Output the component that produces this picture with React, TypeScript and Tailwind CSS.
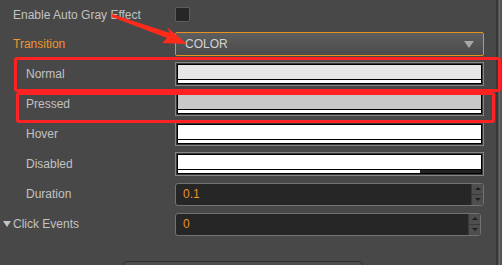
import React from "react";

const font = { fontFamily: '"Liberation Sans", Arial, sans-serif' };

function ColorField({ fill, bar }: { fill: string; bar?: "partial" }) {
  return (
    <div className="h-[24px] flex-1 border border-[#858585] bg-[#3a3a3a] p-px">
      <div className="flex h-full flex-col border border-black">
        <div className={`flex-1 ${fill}`} />
        <div className="h-px bg-black" />
        {bar === "partial" ? (
          <div className="flex h-[3px]">
            <div className="w-[80%] bg-white" />
            <div className="flex-1 bg-[#222222]" />
          </div>
        ) : (
          <div className="h-[3px] bg-white" />
        )}
      </div>
    </div>
  );
}

function NumberField({ value, className = "" }: { value: string; className?: string }) {
  return (
    <div
      className={`flex h-[23px] flex-1 overflow-hidden rounded-[3px] border border-[#737373] bg-[#262626] ${className}`}
    >
      <div className="flex flex-1 items-center pl-[7px] text-[12px] text-[#e8902a]">{value}</div>
      <div className="flex w-[12px] flex-col border-l border-[#3a3a3a] bg-[#4e4e4e]">
        <div className="flex flex-1 items-center justify-center border-b border-[#3a3a3a]">
          <div className="h-0 w-0 border-x-[3px] border-b-[3px] border-x-transparent border-b-[#1e1e1e]" />
        </div>
        <div className="flex flex-1 items-center justify-center">
          <div className="h-0 w-0 border-x-[3px] border-t-[3px] border-x-transparent border-t-[#1e1e1e]" />
        </div>
      </div>
    </div>
  );
}

function Row({
  label,
  indent = true,
  children,
  labelClass = "text-[#c2c2c2]",
}: {
  label: React.ReactNode;
  indent?: boolean;
  children: React.ReactNode;
  labelClass?: string;
}) {
  return (
    <div className="flex h-[30px] shrink-0 items-center">
      <div className={`w-[175px] shrink-0 text-[12px] ${indent ? "pl-[26px]" : "pl-[13px]"} ${labelClass}`}>
        {label}
      </div>
      <div className="flex flex-1 items-center">{children}</div>
    </div>
  );
}

export default function App() {
  return (
    <div className="relative flex h-[265px] w-[502px] overflow-hidden bg-[#484848]" style={font}>
      {/* Inspector */}
      <div className="flex flex-1 flex-col pr-[12px]">
        <div className="flex h-[29px] shrink-0 items-center">
          <div className="w-[175px] shrink-0 pl-[13px] text-[12px] text-[#c2c2c2]">Enable Auto Gray Effect</div>
          <div className="h-[15px] w-[15px] rounded-[1px] border border-[#5c5c5c] bg-[#262626]" />
        </div>

        <Row label="Transition" indent={false} labelClass="text-[#ee9530]">
          <div className="flex h-[24px] flex-1 items-center justify-between rounded-[2px] border border-[#e88f22] bg-gradient-to-b from-[#5e5e5e] to-[#4a4a4a] pl-[9px] pr-[9px]">
            <span className="text-[12px] text-[#d4d4d4]">COLOR</span>
            <div className="h-0 w-0 border-x-[5px] border-t-[7px] border-x-transparent border-t-[#a8a8a8]" />
          </div>
        </Row>

        <Row label="Normal">
          <ColorField fill="bg-[#e6e6e6]" />
        </Row>
        <Row label="Pressed">
          <ColorField fill="bg-[#c8c8c8]" />
        </Row>
        <Row label="Hover">
          <ColorField fill="bg-white" />
        </Row>
        <Row label="Disabled">
          <ColorField fill="bg-white" bar="partial" />
        </Row>
        <Row label="Duration">
          <NumberField value="0.1" />
        </Row>
        <Row
          indent={false}
          label={
            <span className="relative">
              <span className="absolute left-[-10px] top-[4px] h-0 w-0 border-x-[4px] border-t-[6px] border-x-transparent border-t-[#c2c2c2]" />
              Click Events
            </span>
          }
        >
          <NumberField value="0" className="mr-[3px]" />
        </Row>

        <div className="mt-[22px] flex shrink-0">
          <div className="ml-[123px] h-[12px] w-[240px] rounded-t-[4px] border border-[#2e2e2e] bg-[#4e4e4e]" />
        </div>
      </div>

      {/* Scrollbar strip */}
      <div className="w-[6px] border-l-2 border-[#383838] bg-[#555555]">
        <div className="ml-px h-full w-px bg-[#6a6a6a]" />
      </div>

      {/* Annotations */}
      <div className="absolute left-[14px] top-[57px] h-[35px] w-[487px] rounded-[3px] border-[3px] border-[#ff2222]" />
      <div className="absolute left-[16px] top-[92px] h-[31px] w-[479px] rounded-[3px] border-[3px] border-[#ff2222]" />
      <svg className="absolute left-0 top-0" width="502" height="265" viewBox="0 0 502 265">
        <polygon points="112,14 170,33 167,27 187,44 162,43 167,38 112,17" fill="#ff2a1a" />
      </svg>
    </div>
  );
}
